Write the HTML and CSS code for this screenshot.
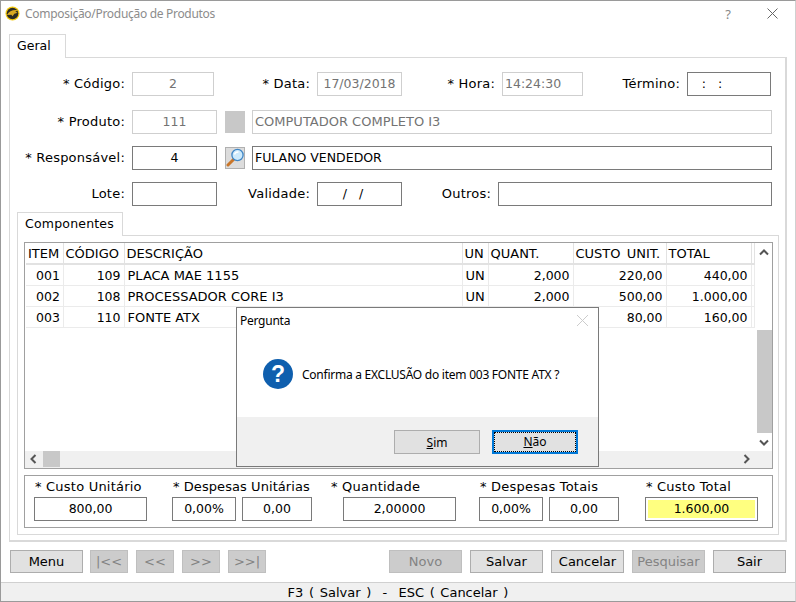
FILE: index.html
```html
<!DOCTYPE html>
<html lang="pt-BR">
<head>
    <meta charset="UTF-8">
    <title>Composição/Produção de Produtos</title>
    <link rel="stylesheet" href="styles.css">
</head>
<body>
    <div class="window">
        <div class="titlebar">
            <svg class="logo" width="15" height="15" viewBox="0 0 16 16">
                <circle cx="8" cy="8" r="7.5" fill="#f2c811"/>
                <circle cx="8" cy="8" r="6.2" fill="#2b2b24"/>
                <path d="M2 9.5 C4.5 5.5 8 3.8 13.5 4.4 L11 6.2 L13.5 7.2 L10 8.2 L8 11 L6.8 9.2 Z" fill="#d8a820"/>
            </svg>
            <span class="title">Composição/Produção de Produtos</span>
            <span class="help">?</span>
            <svg class="close" width="11" height="11" viewBox="0 0 11 11">
                <path d="M.5 .5 L10.5 10.5 M10.5 .5 L.5 10.5" stroke="#666" fill="none"/>
            </svg>
        </div>

        <div class="tab tab-geral">Geral</div>
        <div class="panel">
            <div class="row row-first">
                <label class="lbl l-codigo">* Código:</label>
                <div class="field off center w82">2</div>
                <label class="lbl l-data">* Data:</label>
                <div class="field off center w85">17/03/2018</div>
                <label class="lbl l-hora">* Hora:</label>
                <div class="field off w81">14:24:30</div>
                <label class="lbl l-termino">Término:</label>
                <div class="field center w84"><span class="mask-time">:&nbsp;&nbsp;&nbsp;:</span></div>
            </div>
            <div class="row">
                <label class="lbl l-main">* Produto:</label>
                <div class="field off center w85">111</div>
                <div class="search-btn off-btn"></div>
                <div class="field off grow big">COMPUTADOR COMPLETO I3</div>
            </div>
            <div class="row">
                <label class="lbl l-main">* Responsável:</label>
                <div class="field center w85">4</div>
                <div class="search-btn">
                    <svg width="20" height="20" viewBox="0 0 20 20">
                        <path d="M9 11 L3 17" stroke="#c9762a" stroke-width="3" stroke-linecap="round"/>
                        <circle cx="12.5" cy="7" r="5.6" fill="#cdeafc" stroke="#3f86c6" stroke-width="1.3"/>
                        <path d="M9.5 6.5 C10 4.6 11.5 3.9 13.5 4" stroke="#fff" stroke-width="1.3" fill="none"/>
                    </svg>
                </div>
                <div class="field grow">FULANO VENDEDOR</div>
            </div>
            <div class="row">
                <label class="lbl l-main">Lote:</label>
                <div class="field w85"></div>
                <label class="lbl l-validade">Validade:</label>
                <div class="field center w85"><span class="mask-date">/&nbsp;&nbsp;&nbsp;/</span></div>
                <label class="lbl l-outros">Outros:</label>
                <div class="field grow"></div>
            </div>

            <div class="tab tab-comp">Componentes</div>
            <div class="inner">
                <div class="gridbox">
                    <table class="items">
                        <colgroup>
                            <col class="c-item"><col class="c-cod"><col class="c-desc"><col class="c-un">
                            <col class="c-qt"><col class="c-unit"><col class="c-total"><col class="c-end">
                        </colgroup>
                        <thead>
                            <tr><th>ITEM</th><th>CÓDIGO</th><th>DESCRIÇÃO</th><th>UN</th><th>QUANT.</th><th>CUSTO UNIT.</th><th>TOTAL</th><th></th></tr>
                        </thead>
                        <tbody>
                            <tr><td class="mid">001</td><td class="num">109</td><td>PLACA MAE 1155</td><td>UN</td><td class="num">2,000</td><td class="num">220,00</td><td class="num">440,00</td><td></td></tr>
                            <tr><td class="mid">002</td><td class="num">108</td><td>PROCESSADOR CORE I3</td><td>UN</td><td class="num">2,000</td><td class="num">500,00</td><td class="num">1.000,00</td><td></td></tr>
                            <tr><td class="mid">003</td><td class="num">110</td><td>FONTE ATX</td><td>UN</td><td class="num">2,000</td><td class="num">80,00</td><td class="num">160,00</td><td></td></tr>
                        </tbody>
                    </table>
                    <div class="vscroll">
                        <svg width="16" height="17" viewBox="0 0 16 17"><path d="M4 10.5 L8 6.5 L12 10.5" stroke="#555" stroke-width="2" fill="none"/></svg>
                        <div class="vthumb"></div>
                        <svg width="16" height="17" viewBox="0 0 16 17"><path d="M4 6.5 L8 10.5 L12 6.5" stroke="#555" stroke-width="2" fill="none"/></svg>
                    </div>
                    <div class="hscroll">
                        <svg width="17" height="16" viewBox="0 0 17 16"><path d="M10.5 4 L6.5 8 L10.5 12" stroke="#555" stroke-width="2" fill="none"/></svg>
                        <div class="hthumb"></div>
                        <svg class="hright" width="17" height="16" viewBox="0 0 17 16"><path d="M6.5 4 L10.5 8 L6.5 12" stroke="#555" stroke-width="2" fill="none"/></svg>
                    </div>
                </div>

                <div class="totals">
                    <div class="tgroup g-unit">
                        <span class="tlabel">* Custo Unitário</span>
                        <div class="field center w113">800,00</div>
                    </div>
                    <div class="tgroup g-desp">
                        <span class="tlabel tight">* Despesas Unitárias</span>
                        <div class="pair">
                            <div class="field center w64">0,00%</div>
                            <div class="field center w70">0,00</div>
                        </div>
                    </div>
                    <div class="tgroup g-qt">
                        <span class="tlabel shift-left">* Quantidade</span>
                        <div class="field center w113">2,00000</div>
                    </div>
                    <div class="tgroup g-desp2">
                        <span class="tlabel">* Despesas Totais</span>
                        <div class="pair">
                            <div class="field center w64">0,00%</div>
                            <div class="field center w70">0,00</div>
                        </div>
                    </div>
                    <div class="tgroup g-total">
                        <span class="tlabel">* Custo Total</span>
                        <div class="field center w113 yellow">1.600,00</div>
                    </div>
                </div>
            </div>
        </div>

        <div class="actions">
            <button class="btn wide">Menu</button>
            <div class="nav">
                <button class="btn small" disabled>|&lt;&lt;</button>
                <button class="btn small" disabled>&lt;&lt;</button>
                <button class="btn small" disabled>&gt;&gt;</button>
                <button class="btn small" disabled>&gt;&gt;|</button>
            </div>
            <div class="main-actions">
                <button class="btn wide" disabled>Novo</button>
                <button class="btn wide">Salvar</button>
                <button class="btn wide">Cancelar</button>
                <button class="btn wide" disabled>Pesquisar</button>
                <button class="btn wide">Sair</button>
            </div>
        </div>

        <div class="statusbar">F3 ( Salvar )&nbsp; - &nbsp;ESC ( Cancelar )</div>

        <div class="dialog">
            <div class="dlg-title">
                <span>Pergunta</span>
                <svg width="13" height="13" viewBox="0 0 13 13"><path d="M1 1 L12 12 M12 1 L1 12" stroke="#ccc" fill="none"/></svg>
            </div>
            <div class="dlg-body">
                <svg width="30" height="30" viewBox="0 0 30 30">
                    <circle cx="15" cy="15" r="15" fill="#0f5fae"/>
                    <text class="dlg-q" x="15" y="23" text-anchor="middle">?</text>
                </svg>
                <span>Confirma a EXCLUSÃO do item 003 FONTE ATX ?</span>
            </div>
            <div class="dlg-foot">
                <button class="dbtn"><u>S</u>im</button>
                <button class="dbtn focused"><span class="dots"><u>N</u>ão</span></button>
            </div>
        </div>
    </div>
</body>
</html>
```

FILE: styles.css
```css
html, body {
    margin: 0;
    padding: 0;
}

body {
    font-family: 'DejaVu Sans', Verdana, sans-serif;
    font-size: 12.5px;
    color: #000;
    background: #fff;
}

.window {
    position: relative;
    width: 796px;
    height: 602px;
    box-sizing: border-box;
    border: 1px solid #9a9a9a;
    border-right-color: #d0d0d0;
    overflow: hidden;
    display: flex;
    flex-direction: column;
}

.titlebar {
    height: 33px;
    flex: none;
    display: flex;
    align-items: center;
    padding: 0 17px 8px 4px;
    box-sizing: border-box;
}

.title {
    font-family: 'Noto Sans', sans-serif;
    font-size: 12px;
    letter-spacing: -0.3px;
    color: #8c8c8c;
    margin-left: 5px;
    flex: 1;
}

.help {
    font-family: 'Noto Sans', sans-serif;
    font-size: 13px;
    color: #888;
    margin-right: 36px;
}

.tab {
    box-sizing: border-box;
    height: 24px;
    background: #fff;
    border: 1px solid #d9d9d9;
    border-bottom: none;
    position: relative;
    z-index: 1;
    margin-bottom: -1px;
    line-height: 22px;
    padding-left: 7px;
}

.tab-geral {
    width: 57px;
    margin-left: 8px;
}

.tab-comp {
    width: 106px;
    margin: 6px 0 -1px 7px;
    letter-spacing: 0.2px;
}

.panel {
    margin-left: 8px;
    width: 778px;
    height: 485px;
    box-sizing: border-box;
    border: 1px solid #d9d9d9;
    border-right-width: 2px;
    border-bottom-width: 2px;
    padding-top: 14px;
}

.row {
    display: flex;
    margin: 12px 13px 0 0;
    height: 24px;
}

.row-first {
    margin-top: 0;
    margin-bottom: 14px;
}

.row-first + .row {
    margin-top: 0;
}

.lbl {
    box-sizing: border-box;
    padding-right: 7px;
    text-align: right;
    line-height: 23px;
    flex: none;
    font-size: 13px;
    letter-spacing: 0.22px;
    white-space: nowrap;
}

.l-codigo, .l-main { width: 122px; }
.l-data { width: 103px; }
.l-hora { width: 100px; }
.l-termino { width: 104px; }
.l-validade { width: 100px; }
.l-outros { width: 96px; }

.field {
    box-sizing: border-box;
    height: 24px;
    border: 1px solid #7a7a7a;
    background: #fff;
    line-height: 22px;
    padding: 0 2px;
    white-space: nowrap;
    flex: none;
}

.off {
    border-color: #cfcfcf;
    color: #737373;
}

.center { text-align: center; }
.grow { flex: 1; }
.big { font-size: 13px; }
.w64 { width: 64px; }
.w70 { width: 70px; }
.w81 { width: 81px; }
.w82 { width: 82px; }
.w84 { width: 84px; }
.w85 { width: 85px; }
.w113 { width: 113px; }

.mask-time {
    margin-right: 34px;
}

.mask-date {
    margin-right: 13px;
}

.search-btn {
    box-sizing: border-box;
    width: 20px;
    height: 22px;
    margin: 1px 7px 0 8px;
    background: #dcdcdc;
    border: 1px solid #b0b0b0;
    flex: none;
    overflow: hidden;
}

.search-btn svg {
    display: block;
    margin: 0 0 0 -1px;
}

.off-btn {
    background: #c8c8c8;
    border-color: #c8c8c8;
}

.inner {
    margin-left: 7px;
    width: 762px;
    height: 300px;
    box-sizing: border-box;
    border: 1px solid #d9d9d9;
    padding: 6px 5px 0 6px;
}

.gridbox {
    box-sizing: border-box;
    height: 227px;
    border: 1px solid #a0a0a0;
    display: grid;
    grid-template-columns: 730px 1fr;
    grid-template-rows: 1fr 17px;
}

.items {
    border-collapse: collapse;
    table-layout: fixed;
    width: 728px;
    margin-left: 1px;
    height: 84px;
    align-self: start;
    font-size: 13px;
}

.c-item { width: 37px; }
.c-cod { width: 61px; }
.c-desc { width: 338px; }
.c-un { width: 26px; }
.c-qt { width: 85px; }
.c-unit { width: 93px; }
.c-total { width: 85px; }
.c-end { width: 3px; }

.items th, .items td {
    height: 21px;
    box-sizing: border-box;
    padding: 1px 2px 0 3px;
    border-right: 1px solid #ebebeb;
    border-bottom: 1px solid #ebebeb;
    font-weight: normal;
    text-align: left;
    white-space: nowrap;
    overflow: hidden;
}

.items th {
    padding-left: 2px;
    word-spacing: 2px;
    border-right-color: #e2e2e2;
    border-bottom: 2px solid #e2e2e2;
}

.items td.num {
    text-align: right;
    padding-right: 3px;
    font-size: 12.5px;
}

.items td.mid {
    padding-left: 10px;
    font-size: 12.5px;
}

.vscroll {
    display: flex;
    flex-direction: column;
    align-items: center;
    width: 16px;
    margin-left: 1px;
    padding-top: 1px;
}

.vthumb {
    width: 15px;
    height: 103px;
    margin-top: 69px;
    margin-bottom: auto;
    background: #c8c8c8;
}

.vscroll svg {
    flex: none;
}

.hscroll {
    grid-column: 1 / 3;
    display: flex;
    background: #f0f0f0;
}

.hthumb {
    width: 17px;
    height: 16px;
    margin-left: 1px;
    background: #c8c8c8;
}

.hright {
    margin-left: auto;
    margin-right: 17px;
}

.totals {
    box-sizing: border-box;
    height: 53px;
    margin-top: 6px;
    border: 1px solid #a0a0a0;
    padding: 2px 0 0 9px;
    display: flex;
}

.tgroup {
    flex: none;
    display: flex;
    flex-direction: column;
}

.tlabel {
    height: 19px;
    line-height: 17px;
    padding-left: 1px;
    white-space: nowrap;
    font-size: 13px;
    letter-spacing: 0.22px;
}

.tight {
    letter-spacing: 0.07px;
}

.shift-left {
    margin-left: -13px;
}

.pair {
    display: flex;
    gap: 6px;
}

.g-unit { width: 138px; }
.g-desp { width: 171px; }
.g-qt { width: 136px; }
.g-desp2 { width: 166px; }

.yellow {
    background: #ffff80;
    box-shadow: inset 0 0 0 2px #fff;
}

.actions {
    display: flex;
    margin: 8px 0 0 9px;
    flex: none;
}

.nav {
    display: flex;
    gap: 8px;
    margin-left: 7px;
}

.main-actions {
    display: flex;
    gap: 8px;
    margin-left: 123px;
}

.btn {
    box-sizing: border-box;
    height: 23px;
    border: 1px solid #adadad;
    background: #e1e1e1;
    font-family: inherit;
    font-size: 13px;
    color: #000;
    padding: 0;
}

.btn[disabled] {
    background: #cccccc;
    border-color: #bfbfbf;
    color: #838383;
}

.wide { width: 73px; }
.small { width: 38px; }

.statusbar {
    position: absolute;
    left: 0;
    right: 0;
    bottom: 0;
    height: 19px;
    box-sizing: border-box;
    background: #f0f0f0;
    border-top: 1px solid #d0d0d0;
    text-align: center;
    line-height: 19px;
    font-size: 13px;
    word-spacing: 1.5px;
}

.dialog {
    position: absolute;
    left: 235px;
    top: 306px;
    width: 363px;
    height: 160px;
    box-sizing: border-box;
    border: 1px solid #7a7a7a;
    background: #fff;
    display: flex;
    flex-direction: column;
    font-family: 'Noto Sans', sans-serif;
    font-size: 12px;
    letter-spacing: -0.25px;
}

.dlg-title {
    display: flex;
    justify-content: space-between;
    align-items: center;
    height: 24px;
    padding: 0 9px 0 3px;
    flex: none;
}

.dlg-body {
    flex: 1;
    display: flex;
    align-items: center;
    gap: 9px;
    padding: 0 0 1px 26px;
}

.dlg-q {
    font-family: 'Liberation Sans', sans-serif;
    font-size: 23px;
    font-weight: bold;
    fill: #fff;
}

.dlg-foot {
    height: 49px;
    flex: none;
    background: #f0f0f0;
    display: flex;
    justify-content: flex-end;
    align-items: flex-start;
    gap: 12px;
    padding: 13px 20px 0 0;
    box-sizing: border-box;
}

.dbtn {
    box-sizing: border-box;
    width: 86px;
    height: 24px;
    background: #e1e1e1;
    border: 1px solid #adadad;
    font-family: inherit;
    font-size: 12px;
    color: #000;
    padding: 0;
}

.focused {
    border: 2px solid #0078d7;
    padding: 0;
}

.dots {
    display: block;
    height: 20px;
    line-height: 18px;
    box-sizing: border-box;
    border: 1px dotted #000;
}
```
